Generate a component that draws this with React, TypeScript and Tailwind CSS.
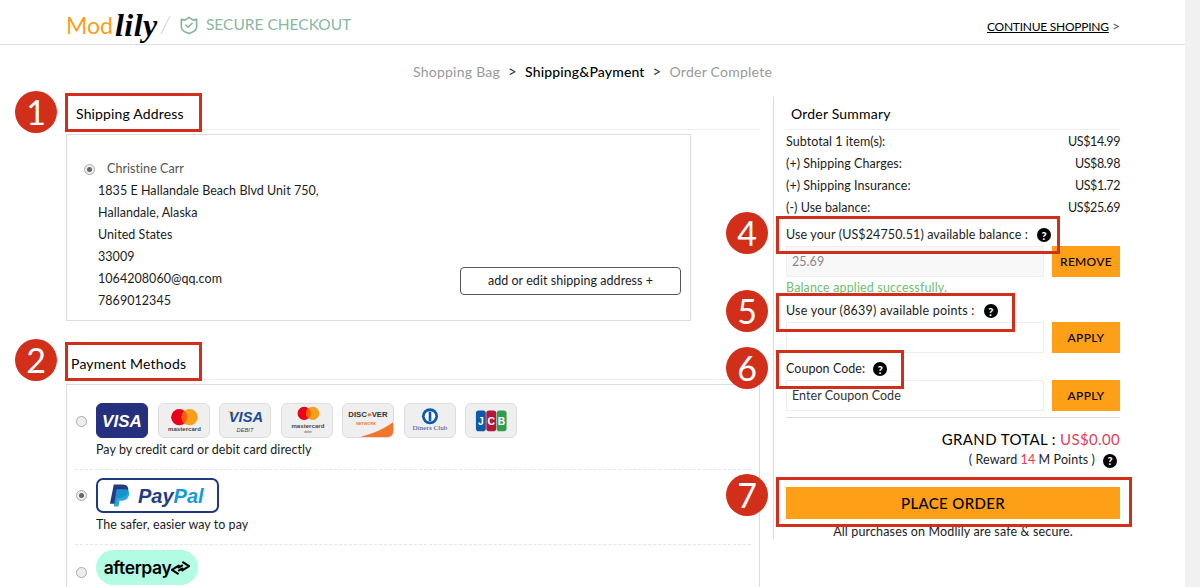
import React from "react";

const font = "font-['Lato','Liberation_Sans',sans-serif]";

function Help({ className = "" }: { className?: string }) {
  return (
    <span className={`inline-flex h-[14px] w-[14px] items-center justify-center rounded-full bg-black text-[11px] font-black leading-none tracking-normal text-white ${className}`}>?</span>
  );
}

function Radio({ on = false }: { on?: boolean }) {
  return (
    <span className="flex h-[11px] w-[11px] items-center justify-center rounded-full border border-[#aaa] bg-[#eee]">
      {on && <span className="h-[5px] w-[5px] rounded-full bg-[#666]" />}
    </span>
  );
}

function CardFrame({ children, dark = false }: { children: React.ReactNode; dark?: boolean }) {
  return (
    <div className={`h-[35px] w-[52px] overflow-hidden rounded-[6px] border ${dark ? "border-[#25317f] bg-[#25317f]" : "border-[#ddd] bg-[#efefef]"}`}>
      <svg viewBox="0 0 52 35" className="h-full w-full">{children}</svg>
    </div>
  );
}

function Cards() {
  const sans = "Liberation Sans, sans-serif";
  return (
    <div className="flex gap-[9.5px]">
      <CardFrame dark>
        <text x="26" y="24" textAnchor="middle" fontFamily={sans} fontSize="18" fontWeight="700" fontStyle="italic" fill="#fff">VISA</text>
      </CardFrame>
      <CardFrame>
        <circle cx="21" cy="14" r="8.6" fill="#eb001b" />
        <circle cx="32" cy="14" r="8.6" fill="#f79e1b" />
        <path d="M26.5 7.400a8.600 8.600 0 0 1 0 13.200a8.600 8.600 0 0 1 0-13.200z" fill="#ff5f00" />
        <text x="26.5" y="29" textAnchor="middle" fontFamily={sans} fontSize="6.400" fontWeight="700" fill="#444">mastercard</text>
      </CardFrame>
      <CardFrame>
        <path d="M7 8l6 0 2 5c-2-2-5-4-8-5z" fill="#f7a823" />
        <text x="27" y="19" textAnchor="middle" fontFamily={sans} fontSize="15.500" fontWeight="700" fontStyle="italic" fill="#1a4a9c">VISA</text>
        <text x="26" y="30" textAnchor="middle" fontFamily={sans} fontSize="6" fontStyle="italic" fill="#444">DEBIT</text>
      </CardFrame>
      <CardFrame>
        <circle cx="23" cy="10" r="7" fill="#eb001b" />
        <circle cx="32" cy="10" r="7" fill="#f79e1b" />
        <path d="M27.500 4.600a7 7 0 0 1 0 10.800a7 7 0 0 1 0-10.800z" fill="#ff5f00" />
        <text x="27" y="25" textAnchor="middle" fontFamily={sans} fontSize="6.400" fontWeight="700" fill="#444">mastercard</text>
        <text x="27" y="31" textAnchor="middle" fontFamily={sans} fontSize="3.500" fill="#555">debit</text>
      </CardFrame>
      <CardFrame>
        <path d="M18 35C32 31 44 26 53 19V35z" fill="#f1752a" />
        <text x="26" y="14" textAnchor="middle" fontFamily={sans} fontSize="8.200" fontWeight="700" fill="#333">DISC<tspan fill="#f1752a">●</tspan>VER</text>
        <text x="24" y="22" textAnchor="middle" fontFamily={sans} fontSize="4" fontWeight="700" fill="#f1752a">NETWORK</text>
      </CardFrame>
      <CardFrame>
        <circle cx="26" cy="13" r="8.500" fill="#0f5aa8" />
        <circle cx="26" cy="13" r="5.600" fill="#fff" />
        <rect x="24.600" y="8" width="2.800" height="10" fill="#0f5aa8" />
        <text x="26" y="28" textAnchor="middle" fontFamily="Liberation Serif, serif" fontSize="7.500" fill="#1a4f9c">Diners Club</text>
      </CardFrame>
      <CardFrame>
        <rect x="10" y="7" width="10.500" height="22" rx="3" fill="#0f5aa8" />
        <rect x="21" y="7" width="10.500" height="22" rx="3" fill="#b3173c" />
        <rect x="32" y="7" width="10.500" height="22" rx="3" fill="#2f9e4a" />
        <text x="15.200" y="22.500" textAnchor="middle" fontFamily={sans} fontSize="11" fontWeight="700" fill="#fff">J</text>
        <text x="26.200" y="22.500" textAnchor="middle" fontFamily={sans} fontSize="11" fontWeight="700" fill="#fff">C</text>
        <text x="37.200" y="22.500" textAnchor="middle" fontFamily={sans} fontSize="11" fontWeight="700" fill="#fff">B</text>
      </CardFrame>
    </div>
  );
}

function PayPal() {
  return (
    <div className="flex h-[35px] w-[123px] items-center gap-[8px] rounded-[7px] border-2 border-[#1e3a82] bg-white pl-[11px]">
      <svg viewBox="0 0 22 24" className="h-[24px] w-[21px]">
        <path d="M5 0h9c5 0 7 3 6 7-1 5-5 7-9 7H8l-1 6H1z" fill="#253b80" />
        <path d="M8 5h8c4 0 6 2 5 6-1 4-4 6-8 6h-2l-1 6H5z" fill="#179bd7" opacity="0.9" />
      </svg>
      <span className="font-['Liberation_Sans',sans-serif] text-[20px] font-bold italic leading-none tracking-normal text-[#253b80]">
        Pay<span className="text-[#179bd7]">Pal</span>
      </span>
    </div>
  );
}

function Afterpay() {
  return (
    <div className="flex h-[35px] w-[102px] items-center justify-center gap-0 rounded-full bg-[#b2fce4]">
      <span className="font-['Inter',sans-serif] text-[17.5px] font-semibold leading-none tracking-[-0.4px] text-black">afterpay</span>
      <svg viewBox="0 0 20 16" className="h-[16px] w-[19px]" fill="none" stroke="#000" strokeWidth="2.200" strokeLinejoin="round">
        <path d="M12 1.500l7 4.500-7 4.500V8.500L7.500 11" />
        <path d="M8 14.500L1 10l7-4.500V7.500L12.500 5" />
      </svg>
    </div>
  );
}

function Row({ label, value }: { label: string; value: string }) {
  return (
    <div className="flex h-[22px] items-center justify-between">
      <span>{label}</span>
      <span className="tracking-[-0.4px]">{value}</span>
    </div>
  );
}

function OrangeBtn({ children }: { children: React.ReactNode }) {
  return (
    <button className="flex h-[31px] w-[68px] items-center justify-center bg-[#fd9f17] text-[12px] font-medium tracking-[0.3px] text-black">{children}</button>
  );
}

function Marker({ n, className }: { n: string; className: string }) {
  return (
    <div className={`absolute flex h-[42px] w-[42px] items-center justify-center rounded-full bg-[#d22f1a] text-[34px] font-normal leading-none tracking-normal text-white ${className}`}>{n}</div>
  );
}

export default function App() {
  return (
    <div className={`relative flex h-[587px] w-[1200px] overflow-hidden bg-white text-[12.5px] tracking-[0.05px] text-[#1c1c1c] ${font}`}>
      <main className="w-[1185px]">
        <header className="flex h-[45px] items-center justify-between border-b border-[#ddd] pl-[66px] pr-[65px] pt-[6px]">
          <div className="flex items-center">
            <span className="text-[23px] font-normal leading-none tracking-normal text-[#f9a01b]">Mod</span>
            <span className="ml-[2px] w-[43px] font-['Liberation_Serif',serif] text-[32px] font-bold italic leading-none tracking-[0.5px] text-black">lily</span>
            <svg viewBox="0 0 12 22" className="ml-[2px] h-[22px] w-[11px]"><path d="M1 21L11 1" stroke="#ccc" strokeWidth="1" /></svg>
            <svg viewBox="0 0 20 20" className="ml-[9px] h-[19px] w-[18px]" fill="none" stroke="#83b59c" strokeWidth="1.800" strokeLinejoin="round">
              <path d="M1.500 3l4 1 4.500-3 4.500 3 4-1v9c0 3-4 5.500-8.500 7-4.500-1.500-8.500-4-8.500-7z" />
              <path d="M6.500 9.500l2.500 2.500 4.500-4.500" strokeLinecap="round" />
            </svg>
            <span className="ml-[8px] text-[15.5px] tracking-normal text-[#8ab8a0]">SECURE CHECKOUT</span>
          </div>
          <div className="text-[12px] tracking-[-0.25px]">
            <span className="text-black underline">CONTINUE SHOPPING</span>
            <span className="text-[14px] text-[#555]"> &gt;</span>
          </div>
        </header>

        <nav className="flex h-[52px] items-center justify-center gap-[8px] text-[14px] tracking-[0.25px] text-[#999]">
          <span>Shopping Bag</span>
          <span className="text-[15px] leading-none text-[#333]">&gt;</span>
          <span className="font-medium tracking-[0.15px] text-black">Shipping&amp;Payment</span>
          <span className="text-[15px] leading-none text-[#333]">&gt;</span>
          <span>Order Complete</span>
        </nav>

        <div className="flex pl-[66px]">
          <section className="w-[694px]">
            <h2 className="flex h-[33px] items-center border-b border-[#eee] pl-[10px] text-[14px] font-normal tracking-[0.15px] text-black">Shipping Address</h2>
            <div className="mt-[4px] flex h-[187px] w-[625px] flex-col border border-[#ddd] pl-[31px] pt-[23px]">
              <div className="-ml-[14px] flex h-[22px] items-center gap-[12px] text-[#555]">
                <Radio on />
                <span>Christine Carr</span>
              </div>
              <div className="flex items-end justify-between pr-[9px]">
                <div className="leading-[22px]">
                  <p>1835 E Hallandale Beach Blvd Unit 750,</p>
                  <p>Hallandale, Alaska</p>
                  <p>United States</p>
                  <p>33009</p>
                  <p>1064208060@qq.com</p>
                  <p>7869012345</p>
                </div>
                <button className="mb-[17px] h-[28px] w-[221px] rounded-[4px] border border-[#555] bg-white text-[12.5px]">add or edit shipping address +</button>
              </div>
            </div>

            <h2 className="mt-[26px] flex h-[33px] items-center border-b border-[#eee] pl-[5px] text-[14px] font-normal tracking-[0.2px] text-black">Payment Methods</h2>
            <div className="mt-[4px] h-[300px] border border-[#ddd] px-[8px]">
              <div className="flex gap-[9px] border-b border-dashed border-[#e5e5e5] pb-[9px] pl-[1px] pt-[18px]">
                <div className="flex h-[35px] items-center pt-[1px]"><Radio /></div>
                <div>
                  <Cards />
                  <p className="h-[22px] leading-[23px]">Pay by credit card or debit card directly</p>
                </div>
              </div>
              <div className="flex gap-[9px] border-b border-dashed border-[#e5e5e5] pb-[9px] pl-[1px] pt-[8px]">
                <div className="flex h-[35px] items-center"><Radio on /></div>
                <div>
                  <PayPal />
                  <p className="h-[22px] leading-[23px]">The safer, easier way to pay</p>
                </div>
              </div>
              <div className="flex gap-[9px] pl-[1px] pt-[5px]">
                <div className="flex h-[35px] items-center pt-[9px]"><Radio /></div>
                <Afterpay />
              </div>
            </div>
          </section>

          <aside className="ml-[13px] h-[442px] w-[347px] border-l border-[#ddd] pl-[12px]">
            <h2 className="flex h-[33px] items-center border-b border-[#eee] pl-[5px] text-[14px] font-normal tracking-[0.2px] text-black">Order Summary</h2>
            <div className="pt-[1px]">
              <Row label="Subtotal 1 item(s):" value="US$14.99" />
              <Row label="(+) Shipping Charges:" value="US$8.98" />
              <Row label="(+) Shipping Insurance:" value="US$1.72" />
              <Row label="(-) Use balance:" value="US$25.69" />
            </div>
            <div className="mt-[5px] flex h-[22px] items-center gap-[9px]">
              <span className="tracking-[0.12px]">Use your (US$24750.51) available balance :</span>
              <Help />
            </div>
            <div className="flex justify-between">
              <div className="flex h-[31px] w-[258px] items-center border border-[#eee] bg-[#f8f8f8] pl-[5px] pt-[1px] text-[#888]">25.69</div>
              <OrangeBtn>REMOVE</OrangeBtn>
            </div>
            <p className="flex h-[22px] items-center tracking-[0.15px] text-[#6cc070]">Balance applied successfully.</p>
            <div className="mt-[1px] flex h-[22px] items-center gap-[9px]">
              <span className="tracking-[0.22px]">Use your (8639) available points :</span>
              <Help />
            </div>
            <div className="flex justify-between">
              <div className="h-[31px] w-[258px] border border-[#eee] bg-white" />
              <OrangeBtn>APPLY</OrangeBtn>
            </div>
            <div className="mt-[5px] flex h-[22px] items-center gap-[8px]">
              <span>Coupon Code:</span>
              <Help />
            </div>
            <div className="flex justify-between">
              <div className="flex h-[31px] w-[258px] items-center border border-[#eee] bg-white pl-[5px] pt-[1px] text-[#333]">Enter Coupon Code</div>
              <OrangeBtn>APPLY</OrangeBtn>
            </div>
            <div className="mt-[6px] border-t border-[#ddd] pt-[10px] text-right">
              <p className="h-[22px] text-[15px] leading-[22px] tracking-[0.35px] text-black">GRAND TOTAL : <span className="text-[#e0435a]">US$0.00</span></p>
              <p className="flex h-[21px] items-center justify-end gap-[8px] pr-[3px]">
                <span className="tracking-[0.1px]">( Reward <span className="text-[#f0384f]">14</span> M Points )</span>
                <Help />
              </p>
            </div>
            <button className="mt-[16px] h-[32px] w-full bg-[#fd9f17] text-[15px] font-medium tracking-[0.35px] text-black">PLACE ORDER</button>
            <p className="mt-[2px] h-[22px] text-center leading-[22px] tracking-[0.15px]">All purchases on Modlily are safe &amp; secure.</p>
          </aside>
        </div>
      </main>
      <div className="w-[15px] bg-[#f1f1f1]" />

      <div className="absolute left-[65px] top-[93px] h-[39px] w-[137px] border-[3px] border-[#d22f1a]" />
      <div className="absolute left-[65px] top-[342px] h-[39px] w-[137px] border-[3px] border-[#d22f1a]" />
      <div className="absolute left-[776px] top-[216px] h-[38px] w-[284px] border-[3px] border-[#d22f1a]" />
      <div className="absolute left-[776px] top-[293px] h-[39px] w-[239px] border-[3px] border-[#d22f1a]" />
      <div className="absolute left-[776px] top-[350px] h-[39px] w-[128px] border-[3px] border-[#d22f1a]" />
      <div className="absolute left-[776px] top-[477px] h-[50px] w-[356px] border-[3px] border-[#d22f1a]" />
      <Marker n="1" className="left-[15px] top-[91px]" />
      <Marker n="2" className="left-[15px] top-[339px]" />
      <Marker n="4" className="left-[726px] top-[212px]" />
      <Marker n="5" className="left-[726px] top-[290px]" />
      <Marker n="6" className="left-[726px] top-[347px]" />
      <Marker n="7" className="left-[726px] top-[474px]" />
    </div>
  );
}
